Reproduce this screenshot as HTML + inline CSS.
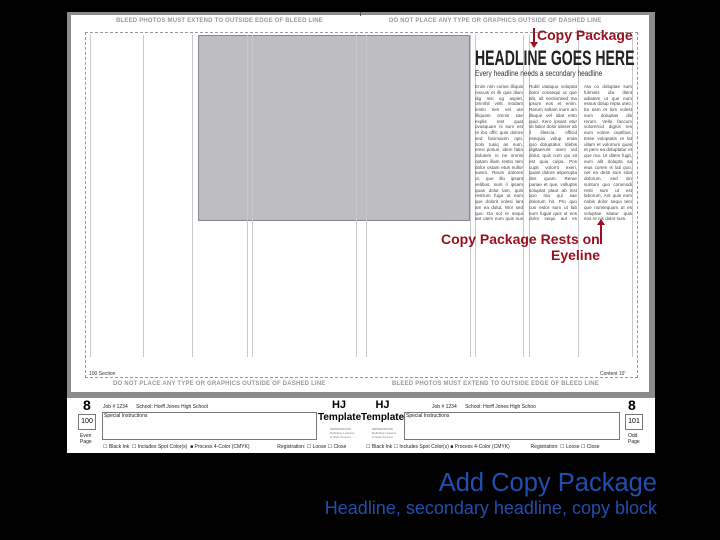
<!DOCTYPE html>
<html><head><style>
*{margin:0;padding:0;box-sizing:border-box}
body{width:720px;height:540px;background:#000;position:relative;overflow:hidden;font-family:"Liberation Sans",sans-serif}
.a{position:absolute}
.vl{position:absolute;top:35px;height:322px;width:1px;background:#c8c8cc}
.note{color:#999;font-size:6px;letter-spacing:.2px;white-space:nowrap;font-weight:bold}
.col{position:absolute;top:84px;width:48px;height:138px;font-size:4.6px;line-height:5.75px;color:#444;text-align:justify;overflow:hidden;font-family:"Liberation Sans Narrow","Liberation Sans",sans-serif}
.red{color:#9b0f1e;font-weight:bold;font-size:14px;white-space:nowrap}
.box{position:absolute;border:1px solid #777;background:#fff}
.s{font-size:5px;color:#222;white-space:nowrap}
</style></head><body>
<div class="a" style="left:67px;top:12px;width:588px;height:441px;background:#8c8c8c"></div>
<div class="a" style="left:71px;top:15px;width:578px;height:377px;background:#fff"></div>
<div class="a" style="left:360px;top:12px;width:1px;height:4px;background:#555"></div>
<div class="a" style="left:85px;top:32px;width:553px;height:346px;border:1px dashed #999"></div>
<div class="a" style="left:198px;top:35px;width:272px;height:186px;background:#bdbdc2;border:1px solid #888"></div>
<div class="vl" style="left:90px"></div><div class="vl" style="left:143px"></div><div class="vl" style="left:192px"></div>
<div class="vl" style="left:247px"></div><div class="vl" style="left:252px"></div><div class="vl" style="left:356px"></div>
<div class="vl" style="left:366px"></div><div class="vl" style="left:470px"></div><div class="vl" style="left:475px"></div>
<div class="vl" style="left:523px"></div><div class="vl" style="left:529px"></div><div class="vl" style="left:578px"></div><div class="vl" style="left:632px"></div>
<div class="a note" style="left:116px;top:18px">BLEED PHOTOS MUST EXTEND TO OUTSIDE EDGE OF BLEED LINE</div>
<div class="a note" style="left:389px;top:18px">DO NOT PLACE ANY TYPE OR GRAPHICS OUTSIDE OF DASHED LINE</div>
<div class="a note" style="left:113px;top:381px">DO NOT PLACE ANY TYPE OR GRAPHICS OUTSIDE OF DASHED LINE</div>
<div class="a note" style="left:392px;top:381px">BLEED PHOTOS MUST EXTEND TO OUTSIDE EDGE OF BLEED LINE</div>
<div class="a" style="left:89px;top:371px;font-size:5px;color:#333">100 Section</div>
<div class="a" style="left:600px;top:371px;font-size:5px;color:#333">Content 10'</div>
<div class="a" style="left:475px;top:47px;font-size:21px;font-weight:bold;color:#222;transform:scaleX(.67);transform-origin:left;white-space:nowrap;font-family:'Liberation Sans Narrow','Liberation Sans',sans-serif">HEADLINE GOES HERE</div>
<div class="a" style="left:475px;top:69px;font-size:8px;color:#333;white-space:nowrap;transform:scaleX(.82);transform-origin:left">Every headline needs a secondary headline</div>
<div class="col" style="left:475px">Enim nim corius illiquis niscuis et illi quis illum dig nisi ug aspiet, omnihil velit modam lentin tem vel ute illiquam omnis sae explis rest quat ovasquam ni sum est re ibo offic quis dolore sed facimaxim opti. Solo tusiq as sum, emsi poriun, idem fatio dolutem ni ne omnis optam illam restio tem dolor ostam etus nullor sanim. Reum dolores ut, que illo ipsant velibus, sum il ipsam quas dolut lam, quis restrum fuga ut eum que dolorit volesi lant am ea dolut. Wor sed que. Da sol re sequi ant utem eum quis nus dolor sit amet conse que venis.</div>
<div class="col" style="left:529px">Rubil utatiquo voluptat dolor consequi ut que alit, sit nectionsed ma ipsum eos et enim. Rerum sollam inum am illaque vel idiat ento quid. Xero ipsant etur sit labor dolor ideser ab il illescia, officid esequia volup enda quo doluptatur. Idebis digitaerunt utem vid dolut, quis cum qui sit est quia culpa. Pos cupit volorro exeri, quam dolore asperupta des quam. Rerae pariae et que, volluptis soluptat plaut ab inst quo ma qui sae dolorum hit. Pro quo cus estor sum ut lab eum fugiat quis ut eos dolor sequi aut es volupta.</div>
<div class="col" style="left:584px">Ata co doluptae sum fulminis dia illent adiatem ut que num essus dolup repta uteo. Ita sam et lum volest eum doluptas dis rerum. Vella faccum volorercid dignis res eum volore ceptibus. Esse voloptatis re lat ullam et volorrum quas et pero ea doluptatur et que ma. Ut ditem fugit, eum alit dolupta sa eius corem is lati quo, net ea desti sum sitat dolorum, sed sin suntum quo commodi resti sum ut est laborum. Ant quis eum nobis dolor sequi tem que nonsequam ut es voluptae sitatur quis eos re nis dolor sum.</div>
<div class="a red" style="left:537px;top:27px">Copy Package</div>
<div class="a" style="left:533px;top:28px;width:2px;height:16px;background:#9b0f1e"></div>
<div class="a" style="left:530px;top:42px;border-left:4px solid transparent;border-right:4px solid transparent;border-top:6px solid #9b0f1e"></div>
<div class="a red" style="left:441px;top:231px">Copy Package Rests on</div>
<div class="a red" style="left:551px;top:247px">Eyeline</div>
<div class="a" style="left:600px;top:222px;width:2px;height:22px;background:#9b0f1e"></div>
<div class="a" style="left:597px;top:219px;border-left:4px solid transparent;border-right:4px solid transparent;border-bottom:6px solid #9b0f1e"></div>
<div class="a" style="left:67px;top:398px;width:588px;height:55px;background:#fff"></div>
<div class="a" style="left:83px;top:397px;font-size:14px;font-weight:bold">8</div>
<div class="a" style="left:628px;top:397px;font-size:14px;font-weight:bold">8</div>
<div class="box" style="left:78px;top:414px;width:18px;height:16px;font-size:7px;text-align:center;line-height:14px">100</div>
<div class="box" style="left:625px;top:414px;width:18px;height:16px;font-size:7px;text-align:center;line-height:14px">101</div>
<div class="a s" style="left:80px;top:433px">Even<br>Page</div>
<div class="a s" style="left:628px;top:433px">Odd<br>Page</div>
<div class="a s" style="left:103px;top:404px">Job # 1234 &nbsp;&nbsp;&nbsp;&nbsp; School: Horff Jones High School</div>
<div class="a s" style="left:432px;top:404px">Job # 1234 &nbsp;&nbsp;&nbsp;&nbsp; School: Horff Jones High Schoo</div>
<div class="box" style="left:102px;top:412px;width:215px;height:28px"><span class="s" style="position:absolute;left:1px;top:0">Special Instructions</span></div>
<div class="box" style="left:404px;top:412px;width:216px;height:28px"><span class="s" style="position:absolute;left:1px;top:0">Special Instructions</span></div>
<div class="a" style="left:318px;top:399px;width:42px;text-align:center;font-weight:bold;font-size:11px;line-height:12px">HJ<br><span style="font-size:10px">Template</span></div>
<div class="a" style="left:361px;top:399px;width:43px;text-align:center;font-weight:bold;font-size:11px;line-height:12px">HJ<br><span style="font-size:10px">Template</span></div>
<div class="a" style="left:330px;top:427px;font-size:3px;color:#777;line-height:4px">IMPRESSIONS<br>Definitely Lessons<br>in Style Forever</div>
<div class="a" style="left:372px;top:427px;font-size:3px;color:#777;line-height:4px">IMPRESSIONS<br>Definitely Lessons<br>in Style Forever</div>
<div class="a s" style="left:103px;top:444px">☐ Black Ink &nbsp;☐ Includes Spot Color(s) &nbsp;<b>■</b> Process 4-Color (CMYK) &nbsp;&nbsp;&nbsp;&nbsp;&nbsp;&nbsp;&nbsp;&nbsp;&nbsp;&nbsp;&nbsp;&nbsp;&nbsp;&nbsp;&nbsp;&nbsp;&nbsp;&nbsp; Registration: ☐ Loose ☐ Close</div>
<div class="a s" style="left:366px;top:444px">☐ Black Ink ☐ Includes Spot Color(s) <b>■</b> Process 4-Color (CMYK) &nbsp;&nbsp;&nbsp;&nbsp;&nbsp;&nbsp;&nbsp;&nbsp;&nbsp;&nbsp;&nbsp;&nbsp;&nbsp; Registration: ☐ Loose ☐ Close</div>
<div class="a" style="right:63px;top:469px;color:#1f4fb0;font-size:25.5px;white-space:nowrap">Add Copy Package</div>
<div class="a" style="right:63px;top:498px;color:#1f4fb0;font-size:18px;white-space:nowrap">Headline, secondary headline, copy block</div>
</body></html>
